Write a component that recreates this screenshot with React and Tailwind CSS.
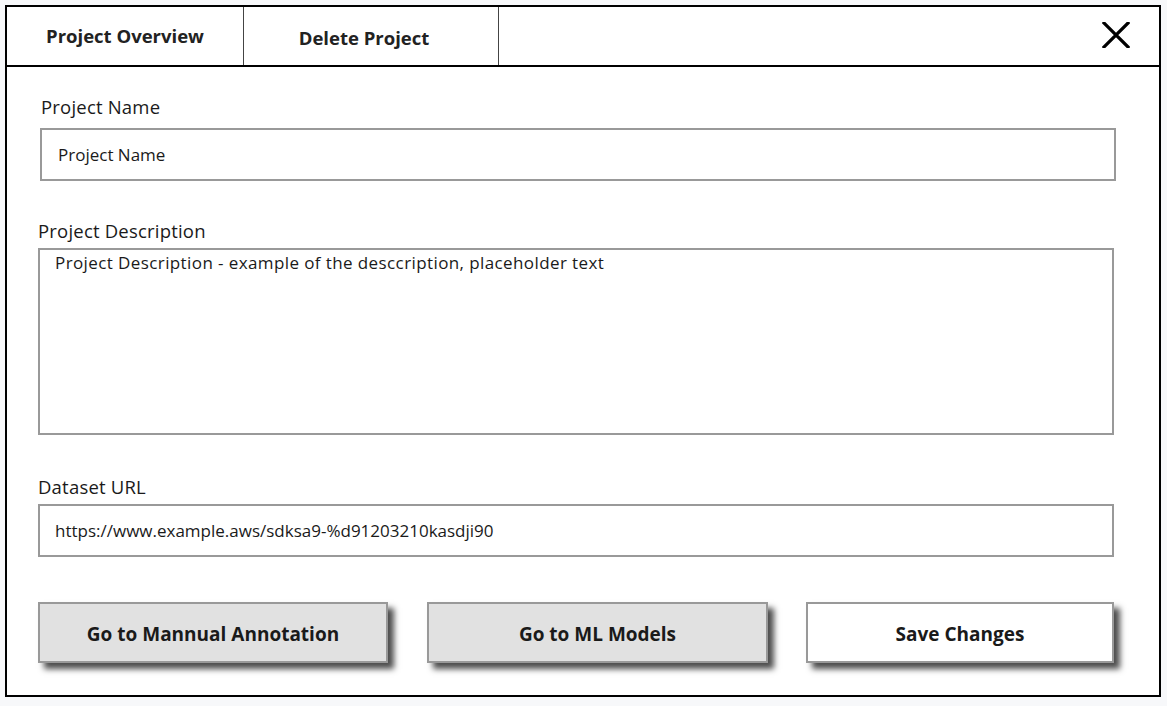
export default function App() {
  const font = { fontFamily: '"Open Sans", "Noto Sans", sans-serif' };
  return (
    <div className="w-full h-[706px] bg-[#f7f8fa] pt-[5px] pl-[5px]" style={font}>
      <div className="w-[1156px] h-[692px] border-2 border-black bg-white flex flex-col text-[#1a1a1a]">
        <div className="h-[60px] shrink-0 flex border-b-2 border-black">
          <div className="w-[237px] border-r border-[#444] flex items-center justify-center pt-[0px]">
            <span className="text-[18.5px] font-bold text-[#222]">Project Overview</span>
          </div>
          <div className="w-[255px] border-r border-[#444] flex items-center justify-center pr-[14px] pt-[4px]">
            <span className="text-[18.5px] font-bold text-[#222]">Delete Project</span>
          </div>
          <div className="flex-1 flex items-center justify-end pr-[29px] pb-[2px]">
            <svg width="28" height="26" viewBox="0 0 28 26">
              <path d="M2 1 L26 25 M26 1 L2 25" stroke="#000" strokeWidth="3.2" strokeLinecap="square" />
            </svg>
          </div>
        </div>
        <div className="flex flex-col pl-[31px] pr-[45px]">
          <div className="ml-[3px] mt-[28px] h-[24px] flex items-center text-[18.5px] tracking-[0.2px]">Project Name</div>
          <div className="ml-[2px] -mr-[2px] mt-[9px] h-[53px] border-2 border-[#999] flex items-center pl-[16px] text-[17px]">
            Project Name
          </div>
          <div className="mt-[38px] h-[24px] flex items-center text-[18.5px] tracking-[0.2px]">Project Description</div>
          <div className="mt-[5px] h-[187px] border-2 border-[#999] pl-[15px] pt-[1px] text-[17px] tracking-[0.4px] leading-[24px]">
            Project Description - example of the desccription, placeholder text
          </div>
          <div className="mt-[40px] h-[24px] flex items-center text-[18.5px] tracking-[0.2px]">Dataset URL</div>
          <div className="mt-[5px] h-[53px] border-2 border-[#999] flex items-center pl-[15px] text-[17px]">
            https://www.example.aws/sdksa9-%d91203210kasdji90
          </div>
          <div className="mt-[45px] flex">
            <div className="w-[350px] h-[61px] border-2 border-[#999] bg-[#e1e1e1] flex items-center justify-center pt-[3px] text-[19px] font-bold shadow-[6px_6px_6px_rgba(0,0,0,0.7)]">
              Go to Mannual Annotation
            </div>
            <div className="ml-[39px] w-[341px] h-[61px] border-2 border-[#999] bg-[#e1e1e1] flex items-center justify-center pt-[3px] text-[19px] font-bold shadow-[6px_6px_6px_rgba(0,0,0,0.7)]">
              Go to ML Models
            </div>
            <div className="ml-[38px] w-[308px] h-[61px] border-2 border-[#999] bg-white flex items-center justify-center pt-[3px] text-[19px] font-bold shadow-[6px_6px_6px_rgba(0,0,0,0.7)]">
              Save Changes
            </div>
          </div>
        </div>
      </div>
    </div>
  );
}
